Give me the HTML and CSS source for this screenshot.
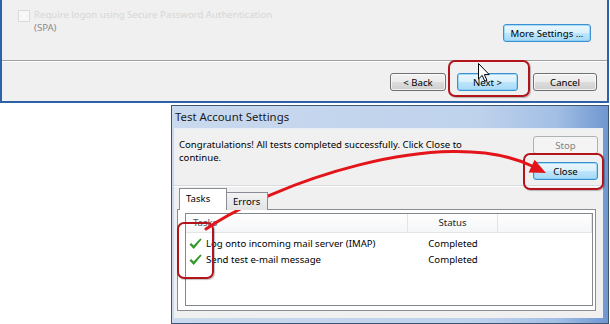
FILE: index.html
```html
<!doctype html>
<html lang="en">
  <head>
    <meta charset="UTF-8" />
    <title>Test Account Settings</title>
    <link rel="stylesheet" href="styles.css">
  </head>
  <body>
    <div class="page">
      <!-- Account wizard (background window) -->
      <div class="wizard">
        <div class="wizard-top">
          <div class="auth-option">
            <span class="checkbox"></span>
            <div class="auth-label">
              <div class="faded">Require logon using Secure Password Authentication</div>
              <div>(SPA)</div>
            </div>
          </div>
          <button class="btn btn-default more">More Settings ...</button>
        </div>
        <div class="wizard-sep"></div>
        <div class="wizard-buttons">
          <button class="btn back">&lt; Back</button>
          <button class="btn btn-default next">Next &gt;</button>
          <button class="btn cancel">Cancel</button>
        </div>
      </div>

      <!-- Test Account Settings dialog -->
      <div class="dialog">
        <div class="dialog-title">Test Account Settings</div>
        <div class="dialog-body">
          <div class="summary">
            <p>Congratulations! All tests completed successfully. Click Close to<br>continue.</p>
            <div class="side-buttons">
              <button class="btn" disabled>Stop</button>
              <button class="btn btn-default">Close</button>
            </div>
          </div>
          <div class="body-sep"></div>
          <div class="tabs">
            <div class="tab active">Tasks</div>
            <div class="tab">Errors</div>
          </div>
          <div class="tab-panel">
            <div class="listview">
              <div class="lv-head">
                <div class="lv-col">Tasks</div>
                <div class="lv-col center">Status</div>
                <div class="lv-col"></div>
              </div>
              <div class="lv-row">
                <div class="lv-task">
                  <svg class="check" width="13" height="12" viewBox="0 0 13 12">
                    <path d="M0.5 6.6 L2.2 5 L4.6 7.6 L11.3 0.4 L12.6 1.6 L4.7 11 Z" fill="#2f9a2a" />
                  </svg>
                  Log onto incoming mail server (IMAP)
                </div>
                <div class="center">Completed</div>
                <div></div>
              </div>
              <div class="lv-row">
                <div class="lv-task">
                  <svg class="check" width="13" height="12" viewBox="0 0 13 12">
                    <path d="M0.5 6.6 L2.2 5 L4.6 7.6 L11.3 0.4 L12.6 1.6 L4.7 11 Z" fill="#2f9a2a" />
                  </svg>
                  Send test e-mail message
                </div>
                <div class="center">Completed</div>
                <div></div>
              </div>
            </div>
          </div>
        </div>
      </div>

      <!-- Annotations drawn over the screenshot -->
      <div class="mark mark-next"></div>
      <div class="mark mark-close"></div>
      <div class="mark mark-checks"></div>

      <svg class="arrow" width="610" height="324" viewBox="0 0 610 324">
        <path d="M206 229 C 270 185 442 123 532 166" fill="none" stroke="#e3151a" stroke-width="3" stroke-linecap="round" />
        <polygon points="546,173 528.6,172.4 534.6,159.8" fill="#e3151a" />
      </svg>

      <svg class="cursor" width="12" height="19" viewBox="0 0 12 19">
        <path d="M0.5 0.5 L0.5 16 L4.2 12.4 L6.8 18.2 L8.9 17.3 L6.4 11.6 L11.2 11.6 Z" fill="#fff" stroke="#000" stroke-width="1" stroke-linejoin="round" />
      </svg>
    </div>
  </body>
</html>
```

FILE: styles.css
```css
:root {
  --face: #f0f0f0;
  --frame-blue: #2d62a8;
  --mark-red: #b3141c;
}

body {
  margin: 0;
  background: #ffffff;
  font-family: 'Noto Sans', 'Open Sans', sans-serif;
  font-size: 9.6px;
  color: #000;
}

.page {
  position: relative;
  width: 610px;
  height: 324px;
  overflow: hidden;
}

/* Buttons (Windows 7 look) */
.btn {
  font: inherit;
  color: #000;
  height: 18px;
  padding: 0;
  border: 1px solid #707070;
  border-radius: 3px;
  background: linear-gradient(#f2f2f2 0%, #ebebeb 50%, #dddddd 50%, #cfcfcf 100%);
  box-shadow: inset 0 0 0 1px rgba(255, 255, 255, 0.7);
}

.btn-default {
  border-color: #3c8fd0;
  background: linear-gradient(#eaf6fd 0%, #d9f0fc 50%, #bee6fd 50%, #a7d9f5 100%);
  box-shadow: inset 0 0 0 1px rgba(120, 200, 240, 0.6);
}

.btn:disabled {
  border-color: #adb2b5;
  background: #f4f4f4;
  color: #838383;
  box-shadow: none;
}

/* Wizard window */
.wizard {
  width: 605px;
  height: 101px;
  background: var(--face);
  border: 2px solid var(--frame-blue);
  border-top: none;
}

.wizard-top {
  display: flex;
  align-items: flex-start;
  height: 60px;
  padding: 0 16px;
}

.auth-option {
  flex: 1;
  display: flex;
  align-items: flex-start;
  gap: 4px;
  padding-top: 8px;
  line-height: 13px;
  color: #8a8a8a;
}

.checkbox {
  width: 10px;
  height: 10px;
  margin-top: 2px;
  border: 1px solid #dadada;
  background: #f7f7f7;
}

.faded {
  color: #d6d6d6;
}

.more {
  width: 88px;
  margin-top: 24px;
}

.wizard-sep {
  border-top: 1px solid #a0a0a0;
  border-bottom: 1px solid #ffffff;
}

.wizard-buttons {
  display: flex;
  justify-content: flex-end;
  padding: 11px 10px 0 0;
}

.back { width: 56px; }
.next { width: 61px; margin-left: 11px; }
.cancel { width: 64px; margin-left: 15px; }

/* Dialog */
.dialog {
  width: 436px;
  height: 217px;
  margin: 2px 0 0 171px;
  border: 1px solid #3d5575;
  background: linear-gradient(90deg, #c9d9ee 0%, #bfd2ec 70%, #a3bfe5 88%, #6f97d0 100%);
  display: flex;
  flex-direction: column;
}

.dialog-title {
  height: 22px;
  line-height: 22px;
  padding-left: 3px;
  font-size: 11.4px;
  color: #1a1a1a;
}

.dialog-body {
  flex: 1;
  margin: 0 5px 5px 2px;
  background: var(--face);
  border-top: 1px solid #e8eef6;
}

.summary {
  display: flex;
  justify-content: space-between;
  padding: 7px 5px 0 5px;
}

.summary p {
  margin: 2px 0 0;
  line-height: 13px;
}

.side-buttons {
  display: flex;
  flex-direction: column;
  gap: 8px;
  width: 65px;
}

.body-sep {
  margin-top: 5px;
  border-top: 1px solid #d7dadf;
  border-bottom: 1px solid #ffffff;
}

/* Tabs */
.tabs {
  display: flex;
  align-items: flex-end;
  height: 21px;
  margin-top: 2px;
  padding-left: 5px;
  position: relative;
  z-index: 1;
}

.tab {
  height: 17px;
  line-height: 17px;
  padding: 0 6px;
  width: 28px;
  border: 1px solid #898c95;
  border-bottom: none;
  background: linear-gradient(#f3f3f3, #e3e3e3);
}

.tab.active {
  width: 34px;
  height: 21px;
  line-height: 20px;
  background: #ffffff;
}

.tab + .tab {
  border-left: none;
}

.tab-panel {
  height: 93px;
  margin: -1px 0 0 3px;
  width: 408px;
  padding: 3px 2px 4px 7px;
  border: 1px solid #898c95;
  background: #ffffff;
}

.listview {
  height: 91px;
  border: 1px solid #828790;
  background: #ffffff;
}

.lv-head,
.lv-row {
  display: grid;
  grid-template-columns: 222px 90px 1fr;
}

.lv-head {
  height: 18px;
  line-height: 18px;
  background: linear-gradient(#ffffff, #f4f6f8);
  border-bottom: 1px solid #e5e5e5;
  margin-bottom: 3px;
}

.lv-col {
  padding-left: 7px;
  border-right: 1px solid #e3e4e5;
  color: #4c5563;
}

.lv-col.center {
  padding-left: 0;
  color: #1e1e1e;
}

.center {
  text-align: center;
}

.lv-row {
  height: 16px;
  line-height: 16px;
}

.lv-task {
  display: flex;
  align-items: center;
  gap: 4px;
  padding-left: 3px;
}

/* Annotations */
.mark {
  position: absolute;
  border: 2px solid var(--mark-red);
  border-radius: 7px;
  box-shadow: 1px 1px 1px rgba(0, 0, 0, 0.25);
}

.mark-next {
  left: 448px;
  top: 60px;
  width: 78px;
  height: 33px;
}

.mark-close {
  left: 523px;
  top: 153px;
  width: 77px;
  height: 33px;
}

.mark-checks {
  left: 177px;
  top: 222px;
  width: 33px;
  height: 53px;
}

.arrow {
  position: absolute;
  left: 0;
  top: 0;
}

.cursor {
  position: absolute;
  left: 478px;
  top: 63px;
}
```
